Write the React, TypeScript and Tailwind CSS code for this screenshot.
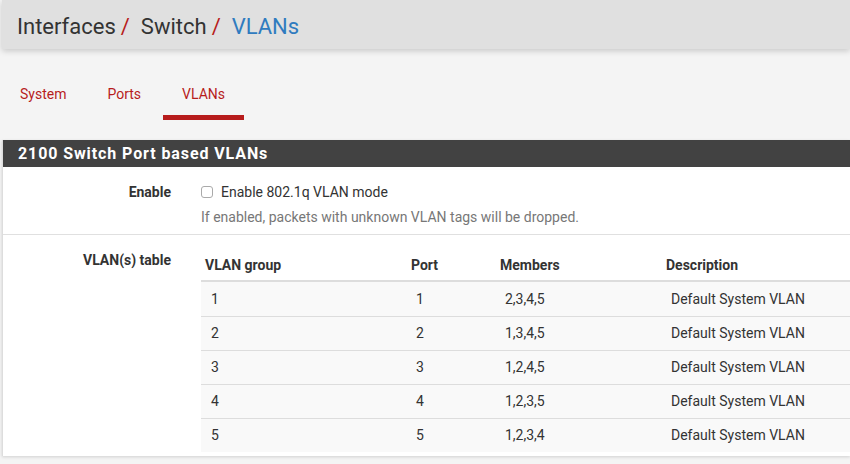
const rows = [
  { group: "1", port: "1", members: "2,3,4,5", descr: "Default System VLAN" },
  { group: "2", port: "2", members: "1,3,4,5", descr: "Default System VLAN" },
  { group: "3", port: "3", members: "1,2,4,5", descr: "Default System VLAN" },
  { group: "4", port: "4", members: "1,2,3,5", descr: "Default System VLAN" },
  { group: "5", port: "5", members: "1,2,3,4", descr: "Default System VLAN" },
];

function Tab({ label, active }: { label: string; active?: boolean }) {
  return (
    <a
      href="#"
      className={
        active
          ? "px-[19px] pb-[11px] leading-[20px] text-[14px] text-[#b71c1c] border-b-[5px] border-[#b71c1c]"
          : "px-[19px] pb-[11px] leading-[20px] text-[14px] text-[#b71c1c] border-b-[5px] border-transparent"
      }
    >
      {label}
    </a>
  );
}

export default function App() {
  return (
    <div
      className="w-[850px] h-[464px] overflow-hidden bg-[#f4f4f4] text-[#333]"
      style={{ fontFamily: "Roboto, 'Liberation Sans', sans-serif" }}
    >
      {/* breadcrumb bar */}
      <div className="ml-[2px] h-[49px] bg-[#e0e0e0] shadow-[0_2px_6px_rgba(0,0,0,0.18)] flex items-center pl-[15px] pt-[3px] text-[22px] text-[#333]">
        <span>Interfaces</span>
        <span className="text-[#b71c1c] ml-[5px] mr-[11px]">/</span>
        <span>Switch</span>
        <span className="text-[#b71c1c] ml-[5px] mr-[11px]">/</span>
        <span className="text-[#2f7bbf]">VLANs</span>
      </div>

      {/* tabs */}
      <nav className="mt-[35px] ml-[1px] flex gap-[3px]">
        <Tab label="System" />
        <Tab label="Ports" />
        <Tab label="VLANs" active />
      </nav>

      {/* panel */}
      <div className="mt-[20px] ml-[2px] bg-white border-l border-[#ddd] shadow-[0_1px_3px_rgba(0,0,0,0.15)] pb-[4px]">
        <div className="h-[27px] bg-[#424242] flex items-center pl-[15px] text-white font-bold text-[16px] tracking-[0.9px]">
          2100 Switch Port based VLANs
        </div>

        {/* enable row */}
        <div className="flex border-b border-[#e0e0e0] pt-[15px] h-[68px]">
          <div className="w-[168px] text-right font-bold text-[14px] leading-[20px]">Enable</div>
          <div className="ml-[30px] flex flex-col">
            <label className="flex items-center gap-[8px] text-[14px] leading-[20px]">
              <span className="w-[12px] h-[12px] border border-[#aaa] rounded-[3px] bg-white" />
              Enable 802.1q VLAN mode
            </label>
            <div className="mt-[5px] text-[14px] leading-[20px] text-[#777]">
              If enabled, packets with unknown VLAN tags will be dropped.
            </div>
          </div>
        </div>

        {/* vlan table row */}
        <div className="flex pt-[15px]">
          <div className="w-[168px] text-right font-bold text-[14px] leading-[20px]">VLAN(s) table</div>
          <div className="ml-[30px] flex-1">
            <div className="flex h-[32px] items-center border-b-2 border-[#ddd] font-bold text-[14px]">
              <div className="w-[206px] pl-[4px]">VLAN group</div>
              <div className="w-[89px] pl-[4px]">Port</div>
              <div className="w-[166px] pl-[4px]">Members</div>
              <div className="flex-1 pl-[4px]">Description</div>
            </div>
            {rows.map((r, i) => (
              <div
                key={r.group}
                className={
                  i === 0
                    ? "flex h-[34px] items-center bg-[#f9f9f9] text-[14px]"
                    : "flex h-[34px] items-center bg-[#f9f9f9] text-[14px] border-t border-[#ddd]"
                }
              >
                <div className="w-[206px] pl-[10px]">{r.group}</div>
                <div className="w-[89px] pl-[9px]">{r.port}</div>
                <div className="w-[166px] pl-[9px]">{r.members}</div>
                <div className="flex-1 pl-[9px]">{r.descr}</div>
              </div>
            ))}
          </div>
        </div>
      </div>
    </div>
  );
}
